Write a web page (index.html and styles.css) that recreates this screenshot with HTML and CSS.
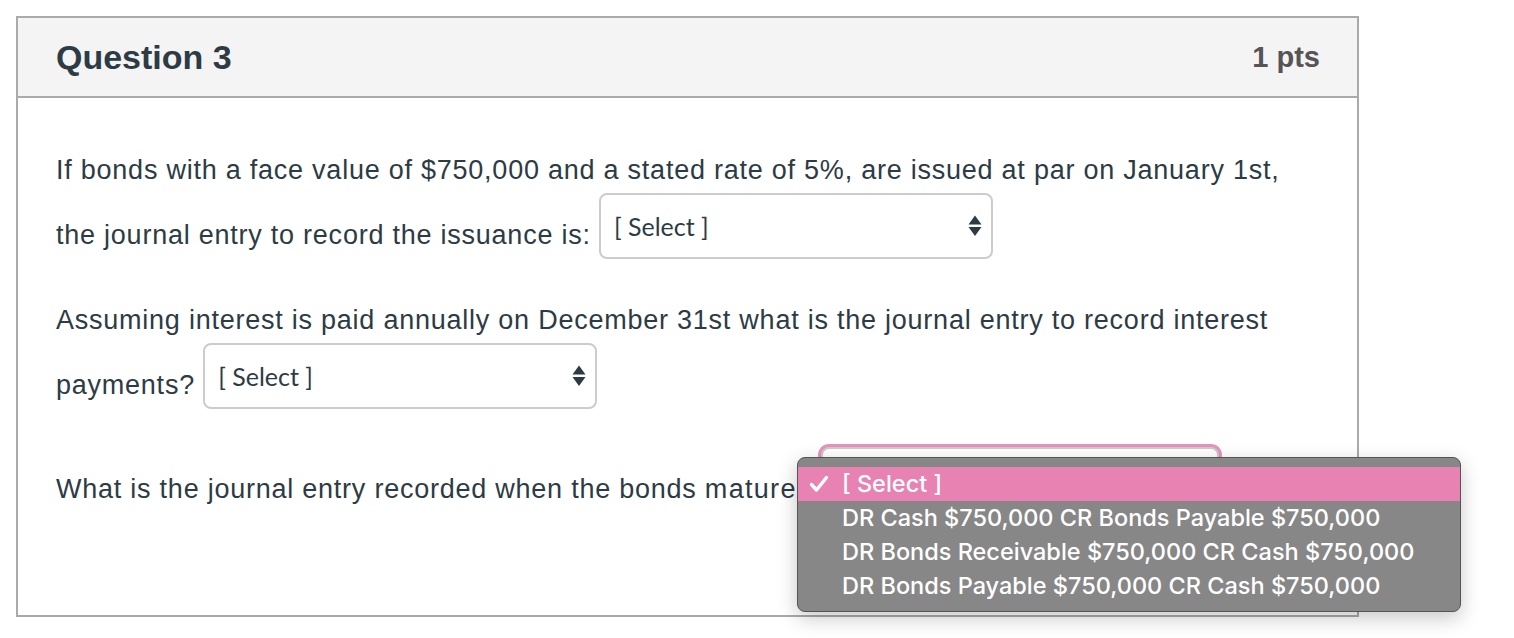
FILE: index.html
```html
<!DOCTYPE html>
<html lang="en">
<head>
    <meta charset="UTF-8">
    <title>Question 3</title>
    <link rel="stylesheet" href="styles.css">
</head>
<body>
    <div class="question">
        <div class="question-header">
            <span class="question-title">Question 3</span>
            <span class="question-points">1 pts</span>
        </div>
        <div class="question-body">
            <p>If bonds with a face value of $750,000 and a stated rate of 5%, are issued at par on January 1st, the journal entry to record the issuance is:
                <span class="select">
                    <span class="select-label">[ Select ]</span>
                    <svg class="select-arrows" width="14" height="24" viewBox="0 0 14 24"><path d="M7 1.5 L13.5 10.5 L0.5 10.5 Z M0.5 13 L13.5 13 L7 22 Z" fill="#2d3b45"/></svg>
                </span>
            </p>
            <p>Assuming interest is paid annually on December 31st what is the journal entry to record interest payments?
                <span class="select">
                    <span class="select-label">[ Select ]</span>
                    <svg class="select-arrows" width="14" height="24" viewBox="0 0 14 24"><path d="M7 1.5 L13.5 10.5 L0.5 10.5 Z M0.5 13 L13.5 13 L7 22 Z" fill="#2d3b45"/></svg>
                </span>
            </p>
            <p>What is the journal entry recorded when the bonds <span class="last-words">mature?</span>
                <span class="select select-focus">
                    <span class="select-label">[ Select ]</span>
                </span>
            </p>
        </div>

        <!-- open native dropdown of the third select -->
        <ul class="dropdown">
            <li class="selected"><svg class="check" width="20" height="18" viewBox="0 0 20 18"><path d="M2.5 9.5 L7.5 15 L17.5 2.5" fill="none" stroke="#fff" stroke-width="3.4" stroke-linecap="round" stroke-linejoin="round"/></svg>[ Select ]</li>
            <li>DR Cash $750,000 CR Bonds Payable $750,000</li>
            <li>DR Bonds Receivable $750,000 CR Cash $750,000</li>
            <li>DR Bonds Payable $750,000 CR Cash $750,000</li>
        </ul>
    </div>
</body>
</html>
```

FILE: styles.css
```css
body {
    margin: 0;
    padding: 16px;
    min-height: 638px;
    box-sizing: border-box;
    background-color: #fff;
    font-family: "Liberation Sans", Arial, sans-serif;
    color: #2d3b45;
}

.question {
    position: relative;
    width: 1339px;
    border: 2px solid #aaa;
}

.question-header {
    display: flex;
    justify-content: space-between;
    align-items: center;
    height: 78px;
    padding: 0 37px 0 38px;
    background-color: #f4f4f4;
    border-bottom: 2px solid #aaa;
}

.question-title {
    font-size: 34px;
    font-weight: bold;
}

.question-points {
    font-size: 29px;
    font-weight: bold;
    color: #555;
}

.question-body {
    box-sizing: border-box;
    height: 517px;
    padding: 49px 38px 0 38px;
}

.question-body p {
    margin: 0 0 38px 0;
    font-size: 27px;
    letter-spacing: 0.76px;
    line-height: 46px;
}

.last-words {
    letter-spacing: 1.3px;
}

.select {
    display: inline-flex;
    justify-content: space-between;
    align-items: center;
    box-sizing: border-box;
    width: 394px;
    height: 66px;
    padding: 0 9px 0 13px;
    border: 2px solid #ccc;
    border-radius: 8px;
    background-color: #fff;
    vertical-align: 8px;
    letter-spacing: 0;
}

.select-label {
    font-family: Lato, sans-serif;
    font-size: 25px;
    line-height: 30px;
}

.select-focus {
    width: 398px;
    box-shadow: 0 0 0 3px #e693bc;
}

.dropdown {
    position: absolute;
    left: 779px;
    top: 439px;
    width: 664px;
    box-sizing: border-box;
    margin: 0;
    padding: 9px 0 8px 0;
    list-style: none;
    background-color: #878787;
    border: 1px solid #555;
    border-radius: 8px;
    box-shadow: 0 6px 20px rgba(0, 0, 0, 0.22);
    font-family: Inter, "Noto Sans", sans-serif;
    font-weight: 500;
    font-size: 23.5px;
    color: #fff;
}

.dropdown li {
    position: relative;
    height: 34px;
    line-height: 34px;
    padding-left: 44px;
}

.dropdown li.selected {
    background-color: #e882b3;
}

.check {
    position: absolute;
    left: 11px;
    top: 8px;
}
```
